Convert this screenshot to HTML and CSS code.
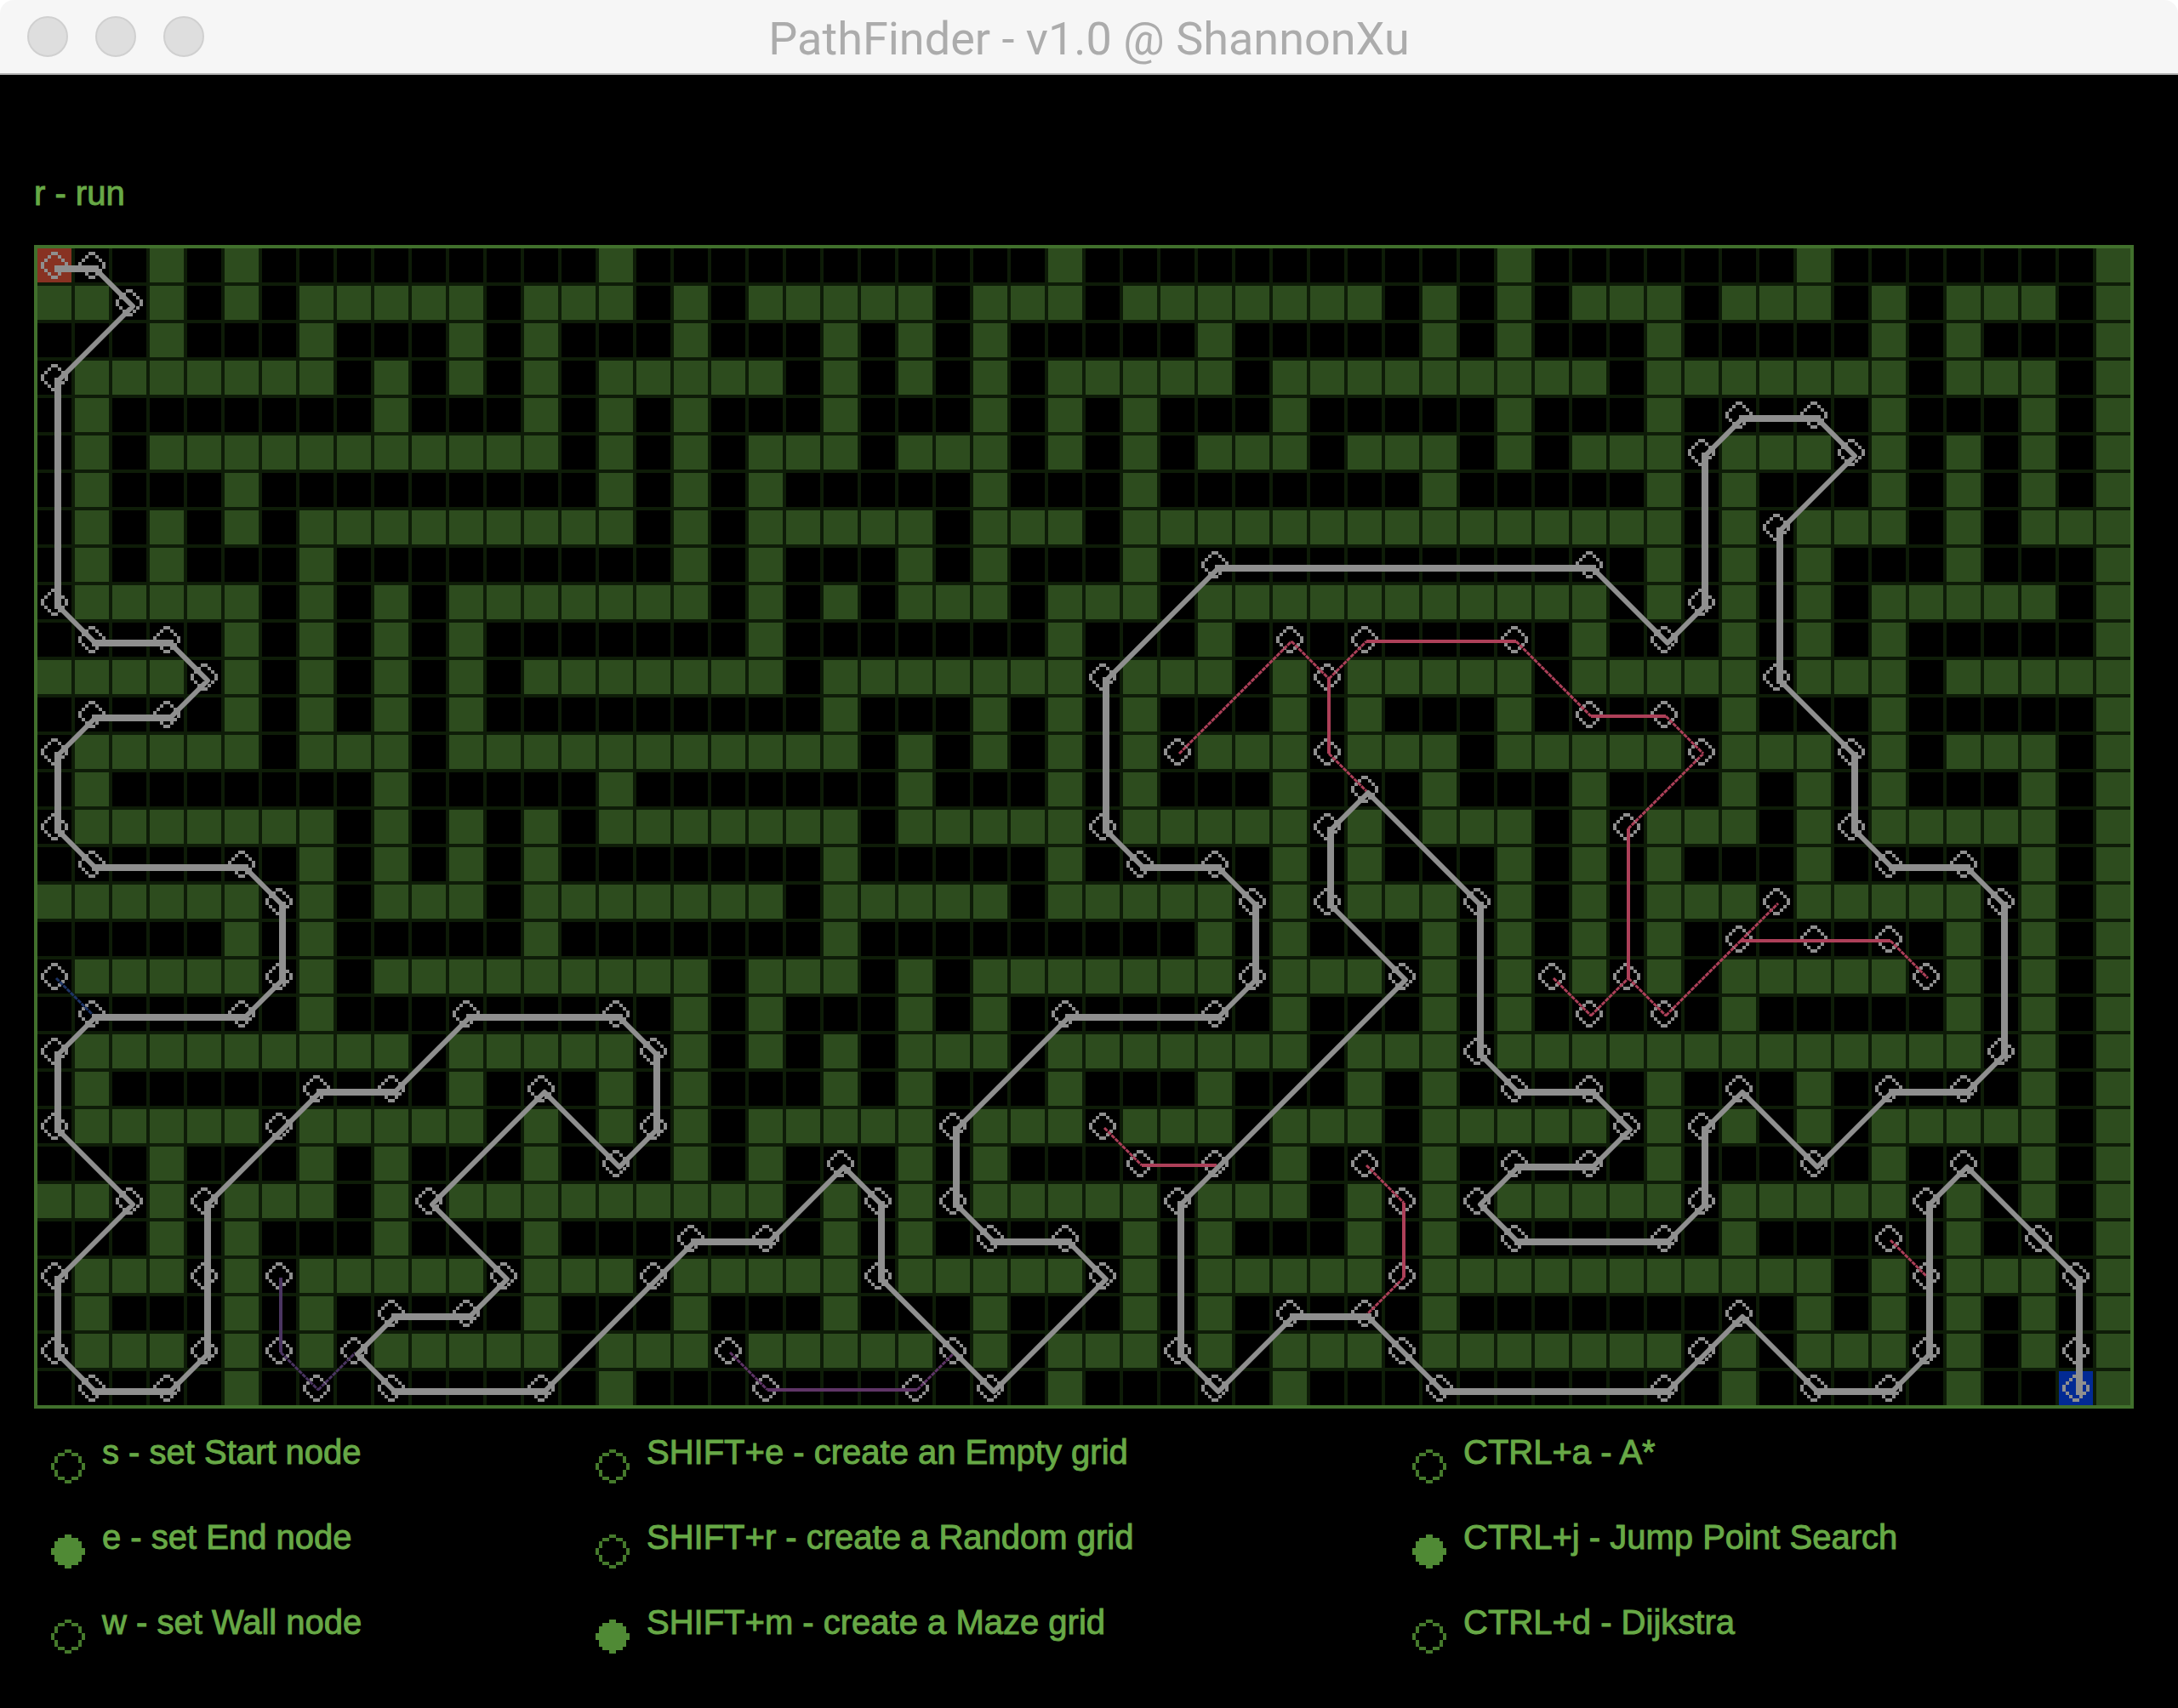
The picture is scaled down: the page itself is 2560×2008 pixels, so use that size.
FILE: index.html
```html
<!DOCTYPE html>
<html lang="en">
<head>
<meta charset="utf-8">
<title>PathFinder - v1.0 @ ShannonXu</title>
<link rel="stylesheet" href="styles.css">
</head>
<body>
<header class="titlebar">
  <div class="lights">
    <button class="light" type="button" aria-label="Close"></button>
    <button class="light" type="button" aria-label="Minimize"></button>
    <button class="light" type="button" aria-label="Zoom"></button>
  </div>
  <h1 class="title">PathFinder - v1.0 @ ShannonXu</h1>
</header>
<main class="stage">
  <button class="run" type="button">r - run</button>
  <svg class="board" id="board" viewBox="0 0 2468 1368" role="img" aria-label="Maze grid">
    <defs>
      <pattern id="lines" width="44" height="44" patternUnits="userSpaceOnUse">
        <path class="line" d="M0 0H4V44H0ZM0 0H44V4H0Z"/>
      </pattern>
      <path id="ring" d="M-4-16h8v4h-8zM-8-12h4v4h-4zM4-12h4v4h-4zM-12-8h4v4h-4zM8-8h4v4h-4zM-16-4h4v8h-4zM12-4h4v8h-4zM-12 4h4v4h-4zM8 4h4v4h-4zM-8 8h4v4h-4zM4 8h4v4h-4zM-4 12h8v4h-8z"/>
    </defs>
    <rect width="2468" height="1368" fill="url(#lines)"/>
    <path class="wall" id="walls"/>
    <rect class="start" x="4" y="4" width="40" height="40"/>
    <rect class="end" x="2380" y="1324" width="40" height="40"/>
    <rect class="frame" x="2" y="2" width="2464" height="1364"/>
    <g id="rings" class="rings"></g>
    <g id="routes"></g>
  </svg>
  <form class="legend">
    <div class="group" role="radiogroup" aria-label="Node">
      <label class="option"><input class="dot" type="radio" name="node"><span>s - set Start node</span></label>
      <label class="option"><input class="dot" type="radio" name="node" checked><span>e - set End node</span></label>
      <label class="option"><input class="dot" type="radio" name="node"><span>w - set Wall node</span></label>
    </div>
    <div class="group" role="radiogroup" aria-label="Grid">
      <label class="option"><input class="dot" type="radio" name="grid"><span>SHIFT+e - create an Empty grid</span></label>
      <label class="option"><input class="dot" type="radio" name="grid"><span>SHIFT+r - create a Random grid</span></label>
      <label class="option"><input class="dot" type="radio" name="grid" checked><span>SHIFT+m - create a Maze grid</span></label>
    </div>
    <div class="group" role="radiogroup" aria-label="Algorithm">
      <label class="option"><input class="dot" type="radio" name="algorithm"><span>CTRL+a - A*</span></label>
      <label class="option"><input class="dot" type="radio" name="algorithm" checked><span>CTRL+j - Jump Point Search</span></label>
      <label class="option"><input class="dot" type="radio" name="algorithm"><span>CTRL+d - Dijkstra</span></label>
    </div>
  </form>
</main>
<script src="maze.js"></script>
</body>
</html>
```
FILE: styles.css
```css
* {
  box-sizing: border-box;
}

body {
  margin: 0;
  min-height: 100vh;
  display: flex;
  flex-direction: column;
  background: #fff;
}

.titlebar {
  display: grid;
  grid-template-columns: 1fr auto 1fr;
  align-items: center;
  height: 88px;
  padding: 0 32px;
  background: linear-gradient(#f6f6f6, #f6f6f6) padding-box;
  border-bottom: 2px solid #b4b4b4;
  border-radius: 16px 16px 0 0;
}

.lights {
  display: flex;
  gap: 32px;
}

.light {
  width: 48px;
  height: 48px;
  padding: 0;
  border: 2px solid #d0d0d0;
  border-radius: 50%;
  background: #dedede;
}

.title {
  margin: 0;
  padding-top: 6px;
  font: 400 54px/64px Roboto, "Liberation Sans", sans-serif;
  color: #acacac;
}

.stage {
  flex: 1;
  padding: 114px 52px 0 40px;
  background: #000;
  color: #67a846;
  font: 40px/50px "Liberation Sans", Arial, sans-serif;
  -webkit-text-stroke: 1px #67a846;
}

.run {
  display: block;
  margin: 0 0 36px;
  padding: 0;
  border: 0;
  background: none;
  color: inherit;
  font: inherit;
}

.board {
  display: block;
  width: 100%;
}

.line {
  fill: #0e1c08;
}

.wall {
  fill: #2d4c1e;
}

.start {
  fill: #883222;
}

.end {
  fill: #022a94;
}

.frame {
  fill: none;
  stroke: #41702c;
  stroke-width: 4;
}

.rings {
  fill: #8f8f8f;
}

.route {
  fill: none;
  stroke-width: 4;
}

.diagonal {
  stroke-width: 3;
  stroke-dasharray: 5 1;
}

.final {
  stroke: #8f8f8f;
  stroke-width: 8;
  stroke-linecap: square;
}

.final.diagonal {
  stroke-width: 6;
  stroke-dasharray: none;
  stroke-linecap: round;
}

.pink {
  stroke: #ad4059;
}

.violet {
  stroke: #4b3562;
}

.plum {
  stroke: #5f3567;
}

.blue {
  stroke: #1e3566;
}

.legend {
  display: grid;
  grid-template-columns: 16fr 24fr 21fr;
  padding: 26px 8px 0 20px;
}

.group {
  display: flex;
  flex-direction: column;
  gap: 50px;
}

.option {
  display: flex;
  align-items: flex-start;
  gap: 20px;
  height: 50px;
  white-space: nowrap;
}

.dot {
  appearance: none;
  flex: none;
  width: 40px;
  height: 40px;
  margin: 22px 0 0;
  background: url("data:image/svg+xml,%3Csvg xmlns='http://www.w3.org/2000/svg' viewBox='0 0 10 10'%3E%3Cpath fill='%23467a2c' d='M4 0h2v1h-2zM2 1h2v1h-2zM6 1h2v1h-2zM1 2h1v2h-1zM8 2h1v2h-1zM0 4h1v2h-1zM9 4h1v2h-1zM1 6h1v2h-1zM8 6h1v2h-1zM2 8h2v1h-2zM6 8h2v1h-2zM4 9h2v1h-2z'/%3E%3C/svg%3E") center / 100% no-repeat;
}

.dot:checked {
  background-image: url("data:image/svg+xml,%3Csvg xmlns='http://www.w3.org/2000/svg' viewBox='0 0 10 10'%3E%3Cpath fill='%23508a35' d='M4 0h2v1h2v1h1v2h1v2h-1v2h-1v1h-2v1h-2v-1h-2v-1h-1v-2h-1v-2h1v-2h1v-1h2z'/%3E%3C/svg%3E");
}
```
FILE: maze.js
```js
// Wall columns of each grid row, top to bottom; "a-b" is an inclusive run.
const WALLS = [
  "3 5 15 27 39 47 55",
  "0-1 3 5 7-11 13-15 17 19-23 25-27 29-35 37 39 41-43 45-47 49 51-53 55",
  "3 7 11 13 17 21 23 25 31 37 39 43 49 51 55",
  "1-7 9 11 13 15-19 21 23 25 27-31 33-41 43-49 51-53 55",
  "1 9 13 15 17 21 25 27 29 33 39 43 49 53 55",
  "1 3-13 15 17 19-21 23-25 27 29 31-33 35-37 39 41-43 45-47 49 51 53 55",
  "1 5 15 17 19 25 29 37 43 45 49 51 53 55",
  "1 3 5 7-15 17 19-23 25-27 29-43 45 47-49 51 53-55",
  "1 3 7 17 19 23 25 29 43 45 47 51 55",
  "1-5 7 9 11-17 19 21 23-25 27-29 31-41 43 45 47 49-53 55",
  "5 7 9 11 19 27 31 41 45 47 49 55",
  "0-3 5 7 9 11 13-19 21-27 29-31 33 35-39 41-45 47-49 51-55",
  "5 7 9 11 21 25 27 29 33 35 39 45 49 55",
  "1-5 7-9 11-21 23 25 27 29 31-33 35-37 39-43 45-47 49 51-53 55",
  "1 9 15 23 27 29 33 37 41 45 47 49 53 55",
  "1-7 9 11 13 15-21 23-27 29-33 35 37-39 41 43-45 47 49-53 55",
  "7 9 11 13 21 27 33 35 39 41 43 47 53 55",
  "0-5 7 9-11 13-19 21-25 27-31 33 35-37 39 41 43-45 47-51 53 55",
  "5 7 13 21 31 33 37 39 41 43 51 53 55",
  "1-5 7 9-17 19-21 23 25-31 33-35 37 39 41 43 45-49 51 53 55",
  "7 17 19 23 25 33 37 39 45 51 53 55",
  "1-9 11-15 17 19 21 23-25 27-33 35-37 39-51 53 55",
  "1 11 15 17 21 23 27 31 35 37 43 47 53 55",
  "1-5 7-11 13 15 17 19-23 25-27 29-31 33-35 37-41 43 45 47 49-53 55",
  "3 7 9 13 17 19 23 25 33 37 43 49 53 55",
  "0-1 3 5-7 9 11-19 21 23 25-29 31-33 35 37 39-43 45-49 51 53 55",
  "3 5 9 13 21 23 29 31 35 37 45 51 55",
  "1-3 5 7-11 13-15 17-21 23-27 29 31-35 37-47 49 51-53 55",
  "1 5 7 13 17 21 25 29 31 37 47 49 51 53 55",
  "1-3 5 7 9-13 15-17 19-23 25 27-29 31 33-35 37-43 45 47-49 51 53 55",
  "5 15 27 33 45 51 55"
];

// Jump points as "column,row", joined in order.
const ROUTES = [
  ["pink", "30,13 33,10 34,11 35,10 39,10 41,12 43,12 44,13 42,15 42,19"],
  ["pink", "34,11 34,13 35,14"],
  ["pink", "40,19 41,20 42,19 43,20 45,18 46,17"],
  ["pink", "45,18 47,18 49,18 50,19"],
  ["pink", "28,23 29,24 31,24"],
  ["pink", "35,24 36,25 36,27 35,28"],
  ["pink", "49,26 50,27"],
  ["violet", "6,27 6,29 7,30 8,29"],
  ["plum", "18,29 19,30 23,30 24,29"],
  ["blue", "0,19 1,20"],
  ["final", "0,0 1,0 2,1 0,3 0,9 1,10 3,10 4,11 3,12 1,12 0,13 0,15 1,16 5,16 6,17 6,19 5,20 1,20 0,21 0,23 2,25 0,27 0,29 1,30 3,30 4,29 4,27 4,25 6,23 7,22 9,22 11,20 15,20 16,21 16,23 15,24 13,22 10,25 12,27 11,28 9,28 8,29 9,30 13,30 16,27 17,26 19,26 21,24 22,25 22,27 24,29 25,30 28,27 27,26 25,26 24,25 24,23 27,20 31,20 32,19 32,17 31,16 29,16 28,15 28,11 31,8 41,8 43,10 44,9 44,5 45,4 47,4 48,5 46,7 46,11 48,13 48,15 49,16 51,16 52,17 52,21 51,22 49,22 47,24 45,22 44,23 44,25 43,26 39,26 38,25 39,24 41,24 42,23 41,22 39,22 38,21 38,17 35,14 34,15 34,17 36,19 31,24 30,25 30,29 31,30 33,28 35,28 36,29 37,30 43,30 44,29 45,28 47,30 49,30 50,29 50,27 50,25 51,24 53,26 54,27 54,29 54,30"]
];

const CELL = 44;
const NS = "http://www.w3.org/2000/svg";

function add(parent, name, attributes) {
  const node = document.createElementNS(NS, name);
  for (const key in attributes) node.setAttribute(key, attributes[key]);
  parent.appendChild(node);
}

let walls = "";
WALLS.forEach((row, y) => {
  for (const run of row.split(" ")) {
    const [from, to = from] = run.split("-").map(Number);
    for (let x = from; x <= to; x++) {
      walls += `M${x * CELL + 4} ${y * CELL + 4}h40v40h-40z`;
    }
  }
});
document.getElementById("walls").setAttribute("d", walls);

const rings = document.getElementById("rings");
const routes = document.getElementById("routes");
const seen = new Set();

for (const [kind, list] of ROUTES) {
  const points = list.split(" ").map(p => p.split(",").map(Number));
  const shift = kind === "final" ? 28 : 26;
  let straight = "";
  let diagonal = "";
  points.forEach(([x, y], i) => {
    if (!seen.has(`${x},${y}`)) {
      seen.add(`${x},${y}`);
      add(rings, "use", { href: "#ring", x: x * CELL + 24, y: y * CELL + 24 });
    }
    if (i === 0) return;
    const [px, py] = points[i - 1];
    const d = `M${px * CELL + shift} ${py * CELL + shift}L${x * CELL + shift} ${y * CELL + shift}`;
    if (px === x || py === y) straight += d;
    else diagonal += d;
  });
  if (straight) add(routes, "path", { class: `route ${kind}`, d: straight });
  if (diagonal) add(routes, "path", { class: `route ${kind} diagonal`, d: diagonal });
}
```
